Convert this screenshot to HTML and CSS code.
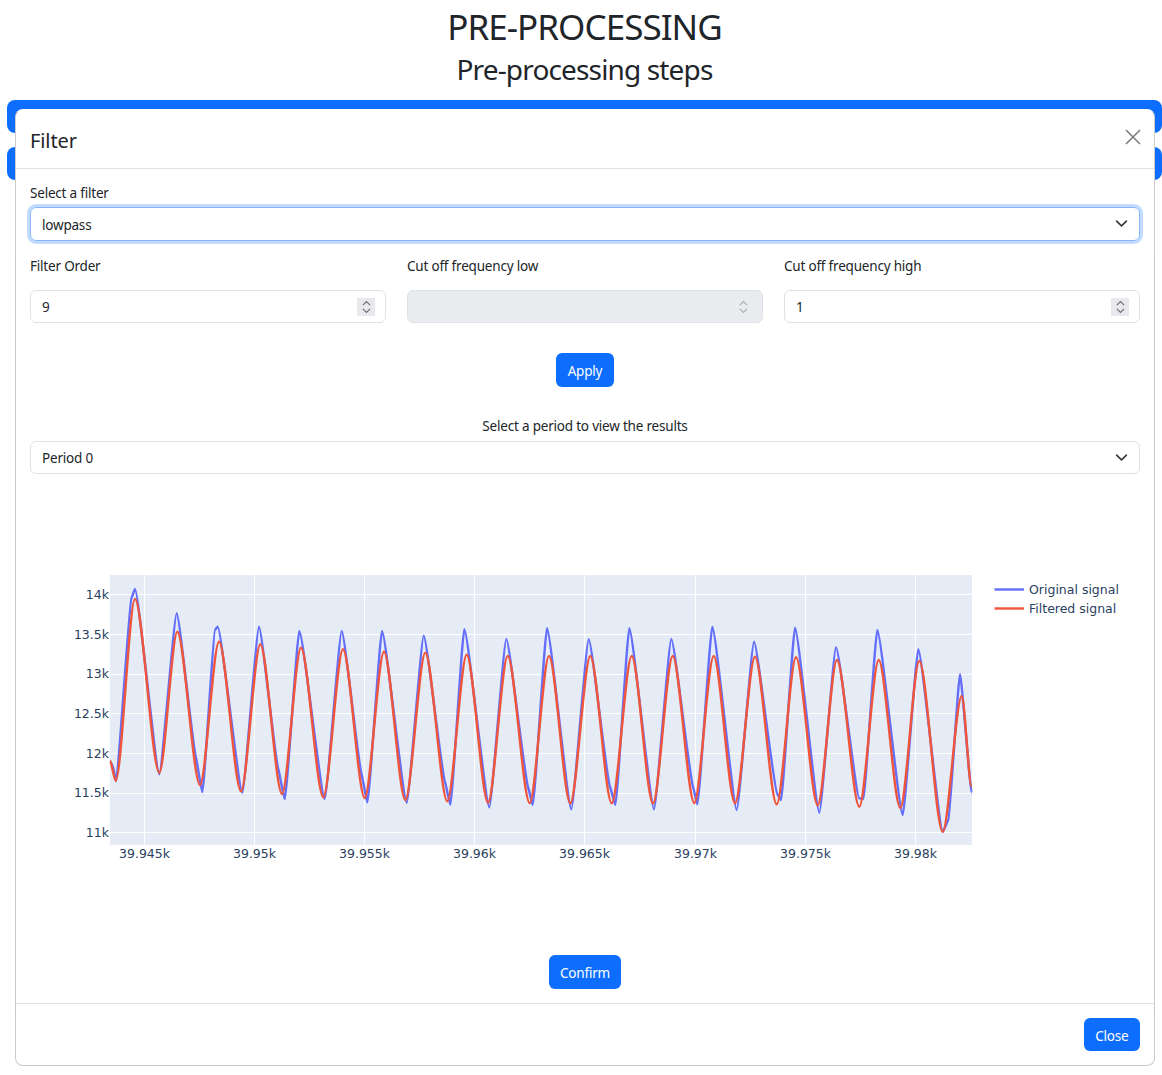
FILE: index.html
```html
<!DOCTYPE html>
<html lang="en">
  <head>
    <meta charset="UTF-8" />
    <meta name="viewport" content="width=device-width, initial-scale=1.0" />
    <title>Pre-processing</title>
    <link rel="stylesheet" href="styles.css">
  </head>

  <body>
    <h1 class="page-title">PRE-PROCESSING</h1>
    <h2 class="page-subtitle">Pre-processing steps</h2>
    <div class="step-bar"></div>
    <div class="step-bar"></div>

    <div class="modal">
      <div class="modal-header">
        <h5 class="modal-title">Filter</h5>
        <svg class="btn-close" viewBox="0 0 16 16"><path d="M1 1l14 14M15 1L1 15" /></svg>
      </div>

      <div class="modal-body">
        <div class="form-label">Select a filter</div>
        <div class="form-select is-focused">
          lowpass
          <svg class="chevron" viewBox="0 0 16 16"><path d="M2 5l6 6 6-6" /></svg>
        </div>

        <div class="param-labels">
          <div>Filter Order</div>
          <div>Cut off frequency low</div>
          <div>Cut off frequency high</div>
        </div>
        <div class="param-inputs">
          <div class="form-control">
            9
            <span class="spinner"><svg viewBox="0 0 10 14"><path d="M1 5l4-4 4 4M1 9l4 4 4-4" /></svg></span>
          </div>
          <div class="form-control is-disabled">
            <span class="spinner"><svg viewBox="0 0 10 14"><path d="M1 5l4-4 4 4M1 9l4 4 4-4" /></svg></span>
          </div>
          <div class="form-control">
            1
            <span class="spinner"><svg viewBox="0 0 10 14"><path d="M1 5l4-4 4 4M1 9l4 4 4-4" /></svg></span>
          </div>
        </div>

        <div class="center-row apply-row"><button class="btn">Apply</button></div>
        <div class="period-label">Select a period to view the results</div>
        <div class="form-select">
          Period 0
          <svg class="chevron" viewBox="0 0 16 16"><path d="M2 5l6 6 6-6" /></svg>
        </div>

        <svg class="chart" id="chart" viewBox="30 475 1110 450">
          <rect class="plot-bg" x="110" y="575" width="862" height="270" />
          <g class="grid">
            <path d="M144.5 575V845M254.5 575V845M364.5 575V845M474.5 575V845M584.5 575V845M695.5 575V845M805.5 575V845M915.5 575V845" />
            <path d="M110 594.5H972M110 634.5H972M110 674.5H972M110 713.5H972M110 753.5H972M110 793.5H972M110 832.5H972" />
          </g>
          <path class="trace trace-orig" id="trace-orig" />
          <path class="trace trace-filt" id="trace-filt" />
          <g class="ytick">
            <text x="109" y="599">14k</text>
            <text x="109" y="639">13.5k</text>
            <text x="109" y="678">13k</text>
            <text x="109" y="718">12.5k</text>
            <text x="109" y="758">12k</text>
            <text x="109" y="797">11.5k</text>
            <text x="109" y="837">11k</text>
          </g>
          <g class="xtick">
            <text x="144.5" y="858">39.945k</text>
            <text x="254.5" y="858">39.95k</text>
            <text x="364.5" y="858">39.955k</text>
            <text x="474.5" y="858">39.96k</text>
            <text x="584.5" y="858">39.965k</text>
            <text x="695.5" y="858">39.97k</text>
            <text x="805.5" y="858">39.975k</text>
            <text x="915.5" y="858">39.98k</text>
          </g>
          <path class="trace trace-orig" d="M994.5 589.5H1024" />
          <path class="trace trace-filt" d="M994.5 608.5H1024" />
          <text class="legend-text" x="1029" y="594">Original signal</text>
          <text class="legend-text" x="1029" y="613">Filtered signal</text>
        </svg>

        <div class="center-row confirm-row"><button class="btn">Confirm</button></div>
      </div>

      <div class="modal-footer"><button class="btn">Close</button></div>
    </div>

    <script src="chart.js"></script>
  </body>
</html>
```

FILE: styles.css
```css
body {
  margin: 0;
  padding: 0 0 0 7px;
  color: #212529;
  background-color: #fff;
  font-family: "Noto Sans", sans-serif;
  font-size: 13.5px;
  letter-spacing: -0.2px;
  line-height: 21px;
  overflow-x: hidden;
}

.page-title {
  margin: 0;
  height: 52px;
  line-height: 54px;
  font-size: 35px;
  font-weight: 400;
  letter-spacing: -0.95px;
  text-align: center;
}

.page-subtitle {
  margin: 0 0 10px;
  height: 38px;
  line-height: 34px;
  font-size: 28px;
  font-weight: 400;
  letter-spacing: -0.85px;
  text-align: center;
}

.step-bar {
  height: 33px;
  margin-bottom: 14px;
  background-color: #0d6efd;
  border-radius: 8px;
}

.modal {
  position: absolute;
  left: 15px;
  top: 109px;
  width: 1140px;
  height: 957px;
  box-sizing: border-box;
  display: flex;
  flex-direction: column;
  background-color: #fff;
  border: 1px solid rgba(0, 0, 0, 0.2);
  border-top-color: #fff;
  border-radius: 8px;
}

.modal-header {
  height: 59px;
  box-sizing: border-box;
  padding: 0 13px 0 14px;
  display: flex;
  align-items: center;
  justify-content: space-between;
  border-bottom: 1px solid #dee2e6;
}

.modal-title {
  margin: 3px 0 0;
  font-size: 20px;
  font-weight: 400;
  letter-spacing: -0.1px;
}

.btn-close {
  width: 16px;
  height: 16px;
  margin-bottom: 4px;
}

.btn-close path {
  fill: none;
  stroke: #7f7f7f;
  stroke-width: 1.6;
}

.modal-body {
  flex: 1;
  padding: 13px 14px 0;
}

.form-label {
  box-sizing: border-box;
  height: 21px;
  padding-top: 1px;
  margin-bottom: 4px;
}

.form-select,
.form-control {
  position: relative;
  box-sizing: border-box;
  height: 33px;
  padding: 6px 11px 4px;
  border: 1px solid #dee2e6;
  border-radius: 6px;
}

.form-select.is-focused {
  height: 34px;
  padding-top: 7px;
  border-color: #86b7fe;
  box-shadow: 0 0 0 3px rgba(13, 110, 253, 0.25);
}

.chevron {
  position: absolute;
  right: 11px;
  top: 9px;
  width: 13px;
  height: 13px;
}

.chevron path {
  fill: none;
  stroke: #343a40;
  stroke-width: 2;
  stroke-linecap: round;
  stroke-linejoin: round;
}

.param-labels,
.param-inputs {
  display: grid;
  grid-template-columns: repeat(3, 1fr);
  gap: 21px;
}

.param-labels {
  box-sizing: border-box;
  margin-top: 14px;
  height: 21px;
  padding-top: 1px;
  margin-bottom: 14px;
}

.is-disabled {
  background-color: #e9ecef;
}

.spinner {
  position: absolute;
  right: 10px;
  top: 7px;
  width: 18px;
  height: 18px;
  display: flex;
  align-items: center;
  justify-content: center;
  background-color: #e9e9ed;
}

.spinner svg {
  width: 9px;
  height: 14px;
}

.spinner path {
  fill: none;
  stroke: #6d6d74;
  stroke-width: 1.3;
}

.is-disabled .spinner {
  background: none;
}

.is-disabled .spinner path {
  stroke: #a9adb2;
}

.center-row {
  display: flex;
  justify-content: center;
}

.apply-row {
  margin-top: 30px;
}

.confirm-row {
  margin-top: 30px;
}

.btn {
  height: 34px;
  padding: 2px 11.5px 0;
  color: #fff;
  background-color: #0d6efd;
  border: none;
  border-radius: 6px;
  font-family: inherit;
  font-size: 13.5px;
  letter-spacing: -0.2px;
  cursor: pointer;
}

.period-label {
  box-sizing: border-box;
  margin-top: 28px;
  height: 21px;
  padding-top: 1px;
  margin-bottom: 5px;
  text-align: center;
}

.chart {
  display: block;
  width: 1110px;
  height: 450px;
  margin-top: 1px;
}

.plot-bg {
  fill: #e5ecf6;
}

.grid path {
  fill: none;
  stroke: #fff;
  stroke-width: 1;
}

.trace {
  fill: none;
  stroke-width: 2.4;
  stroke-linejoin: round;
}

.trace-orig {
  stroke: #636efa;
}

.trace-filt {
  stroke: #ef553b;
}

.ytick text,
.xtick text,
.legend-text {
  font-family: "DejaVu Sans", sans-serif;
  font-size: 12.5px;
  letter-spacing: 0;
  fill: #2a3f5f;
}

.ytick text {
  text-anchor: end;
}

.xtick text {
  text-anchor: middle;
}

.modal-footer {
  height: 62px;
  box-sizing: border-box;
  padding: 14px 14px 0;
  display: flex;
  justify-content: flex-end;
  border-top: 1px solid #dee2e6;
}

.modal-footer .btn {
  height: 33px;
}
```

FILE: chart.js
```js
// key points of each signal, read in page pixels: x, y
const original = [
  [110, 761], [113, 767], [116, 781], [131.5, 598], [135, 589], [159.3, 774.3],
  [176.7, 613.3], [196, 758], [202.3, 792.3], [215, 630], [217.7, 626.7], [242.3, 792.7], [259, 626.7],
  [278.3, 769], [284.7, 799.3], [299.3, 631], [324.7, 799], [341.7, 631], [361.7, 775], [367.3, 802.3],
  [382, 631], [406.7, 802.7], [423.7, 635.7], [445, 782], [450.3, 804.7], [464.3, 629.3], [489.3, 807.3],
  [506.3, 639], [528.3, 788], [532.7, 805], [547, 628.3], [571.3, 809.3], [588.7, 639.3], [610, 786.7],
  [615.3, 805], [629.3, 628.3], [654, 809.3], [671.3, 639], [693.3, 788], [697.3, 804.3], [712.3, 626.7],
  [736.7, 810], [754, 641.7], [777.3, 794], [781, 800], [795, 627.7], [819.3, 812.7], [836, 647.3],
  [859.3, 798.3], [863.3, 799], [877.3, 630], [902.7, 815], [918.3, 649.3], [942.7, 831.7], [948.3, 820],
  [960, 674.3], [971.7, 792.7],
];

const filtered = [
  [110, 761], [115.7, 780.7], [135, 599], [159.3, 772.7], [177.3, 631.7], [200, 785], [219, 641.7],
  [241, 791.3], [260.3, 644.3], [282, 794], [301, 647.7], [323.3, 797.3], [343, 649.3], [364.7, 798],
  [384, 651.7], [405.3, 800], [425.3, 652.7], [447.3, 801.3], [466.7, 654.7], [488, 802.7], [507.7, 656],
  [529.7, 803], [549, 656], [570.3, 803.3], [590.3, 656], [611.7, 803.3], [631.7, 656], [653, 803.3],
  [672.7, 656], [694.3, 803], [713.7, 656], [735, 803.3], [755, 656.7], [776.7, 804.3], [796, 657.3],
  [817.7, 805.3], [837, 660], [859.3, 806.7], [878.7, 660], [900.3, 808], [919.3, 661], [942.7, 831.7],
  [961.7, 696], [971.7, 786.7],
];

// flat at peaks and troughs, a low slope at shoulders
function slopes(points) {
  return points.map((p, i) => {
    if (i === 0 || i === points.length - 1) return 0;
    const a = (p[1] - points[i - 1][1]) / (p[0] - points[i - 1][0]);
    const b = (points[i + 1][1] - p[1]) / (points[i + 1][0] - p[0]);
    if (a * b <= 0) return 0;
    return Math.sign(a) * Math.min(Math.abs(a), Math.abs(b)) * 0.4;
  });
}

function buildPath(points, handle) {
  const m = slopes(points);
  let d = `M${points[0][0]} ${points[0][1]}`;
  for (let i = 1; i < points.length; i++) {
    const [x0, y0] = points[i - 1];
    const [x1, y1] = points[i];
    const h = (x1 - x0) * handle;
    d += `C${x0 + h} ${y0 + m[i - 1] * h} ${x1 - h} ${y1 - m[i] * h} ${x1} ${y1}`;
  }
  return d;
}

document.querySelector("#trace-orig").setAttribute("d", buildPath(original, 0.14));
document.querySelector("#trace-filt").setAttribute("d", buildPath(filtered, 0.3));
```
